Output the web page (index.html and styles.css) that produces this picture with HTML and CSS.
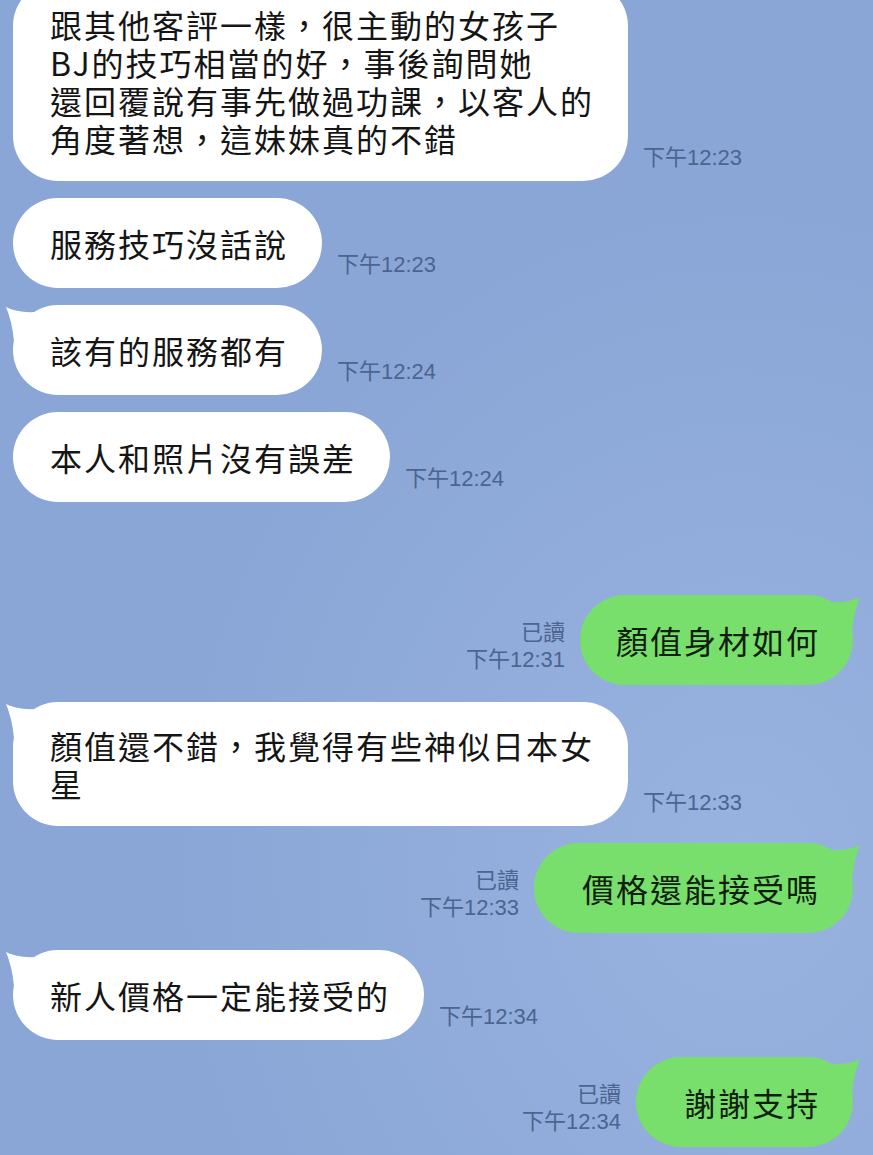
FILE: index.html
```html
<!DOCTYPE html>
<html lang="zh-Hant">
<head>
	<meta charset="UTF-8">
	<title>聊天記錄</title>
	<link rel="stylesheet" href="styles.css">
</head>
<body>
	<div class="chat">
		<!-- 對方訊息 -->
		<div class="row in first">
			<div class="bubble multi">跟其他客評一樣，很主動的女孩子<br>BJ的技巧相當的好，事後詢問她<br>還回覆說有事先做過功課，以客人的<br>角度著想，這妹妹真的不錯</div>
			<div class="meta">下午12:23</div>
		</div>
		<div class="row in">
			<div class="bubble">服務技巧沒話說</div>
			<div class="meta">下午12:23</div>
		</div>
		<div class="row in">
			<div class="bubble">
				<svg class="tail" viewBox="0 0 44 44"><path d="M1 2Q12 8 30 7L30 44L9 44L9 36Q7 16 1 2Z"/></svg>
				該有的服務都有
			</div>
			<div class="meta">下午12:24</div>
		</div>
		<div class="row in">
			<div class="bubble">本人和照片沒有誤差</div>
			<div class="meta">下午12:24</div>
		</div>

		<!-- 自己的訊息 -->
		<div class="row out break">
			<div class="meta">已讀<br>下午12:31</div>
			<div class="bubble snug">
				<svg class="tail" viewBox="0 0 44 44"><path d="M1 2Q12 8 30 7L30 44L9 44L9 36Q7 16 1 2Z"/></svg>
				顏值身材如何
			</div>
		</div>

		<div class="row in">
			<div class="bubble multi">
				<svg class="tail" viewBox="0 0 44 44"><path d="M1 2Q12 8 30 7L30 44L9 44L9 36Q7 16 1 2Z"/></svg>
				顏值還不錯，我覺得有些神似日本女<br>星
			</div>
			<div class="meta">下午12:33</div>
		</div>

		<div class="row out">
			<div class="meta">已讀<br>下午12:33</div>
			<div class="bubble">
				<svg class="tail" viewBox="0 0 44 44"><path d="M1 2Q12 8 30 7L30 44L9 44L9 36Q7 16 1 2Z"/></svg>
				價格還能接受嗎
			</div>
		</div>

		<div class="row in">
			<div class="bubble">
				<svg class="tail" viewBox="0 0 44 44"><path d="M1 2Q12 8 30 7L30 44L9 44L9 36Q7 16 1 2Z"/></svg>
				新人價格一定能接受的
			</div>
			<div class="meta">下午12:34</div>
		</div>

		<div class="row out">
			<div class="meta">已讀<br>下午12:34</div>
			<div class="bubble">
				<svg class="tail" viewBox="0 0 44 44"><path d="M1 2Q12 8 30 7L30 44L9 44L9 36Q7 16 1 2Z"/></svg>
				謝謝支持
			</div>
		</div>
	</div>
</body>
</html>
```

FILE: styles.css
```css
body{margin: 0;height: 1155px;overflow: hidden;background: #8aa6d6;
	background-image: radial-gradient(ellipse at 85% 75%, rgba(170,195,235,0.45), rgba(170,195,235,0) 55%);
	font-family: "Noto Sans CJK TC", sans-serif;}

.chat{display: flex;flex-direction: column;gap: 17px;padding: 0 20px 0 13px;}
.row{display: flex;align-items: flex-end;gap: 15px;}
.row.out{justify-content: flex-end;}
.first{margin-top: -19px;}
.break{margin-top: 76px;}

.bubble{position: relative;background: #fff;color: #151515;font-size: 32px;letter-spacing: 2px;line-height: 38px;
	padding: 26px 34px 26px 37px;border-radius: 45px;white-space: nowrap;}
.bubble.multi{padding-top: 24px;padding-bottom: 24px;}
.out .bubble{background: #78df6c;color: #10200e;padding-left: 48px;padding-right: 33px;}
.out .bubble.snug{padding-left: 36px;}

/* 氣泡尾巴 */
.tail{position: absolute;top: 0;left: -8px;width: 44px;height: 44px;fill: #fff;}
.out .tail{left: auto;right: -8px;transform: scaleX(-1);fill: #78df6c;}

.meta{font-family: "Liberation Sans", "Noto Sans CJK TC", sans-serif;font-size: 22px;line-height: 27px;color: #4b6490;
	margin-bottom: 10px;white-space: nowrap;text-align: right;}
.out .meta{margin-bottom: 12px;}
```
